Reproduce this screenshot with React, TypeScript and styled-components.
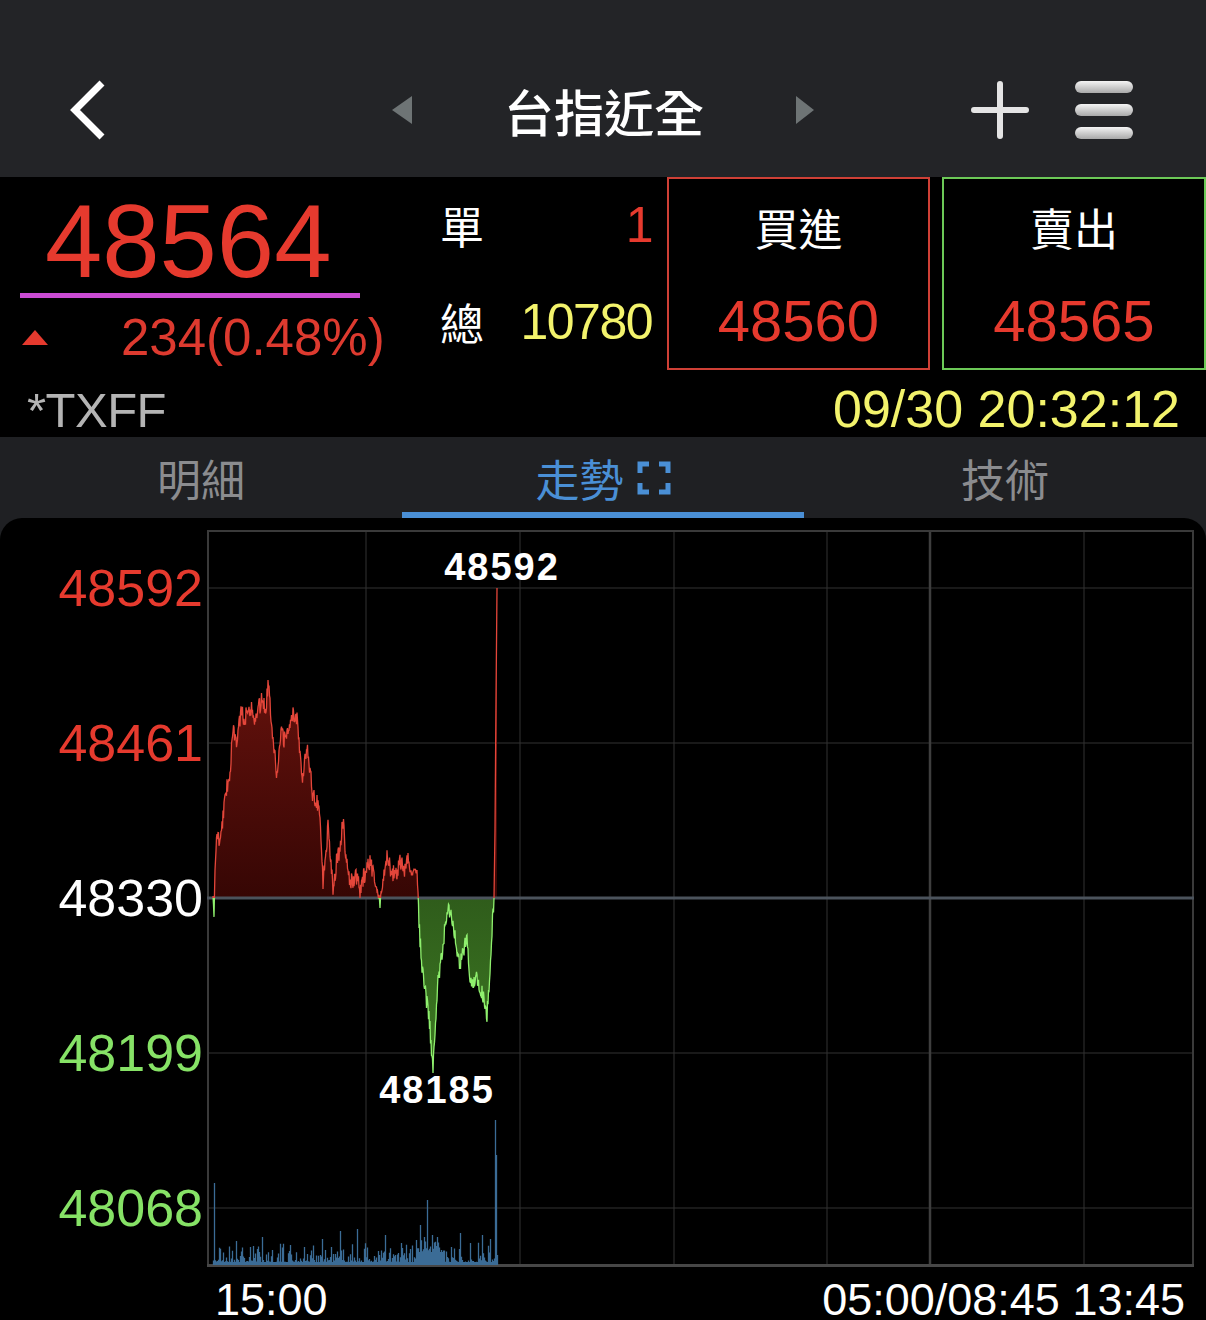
import React from 'react';
import styled, { createGlobalStyle } from 'styled-components';

const RED = '#e63a2e';
const GREEN = '#86e266';
const YELLOW = '#f3f36c';
const BLUE = '#4a8fd5';
const CJK = "'Noto Sans CJK TC', 'Noto Sans CJK SC', sans-serif";
const NUM = "'Liberation Sans', Arial, sans-serif";

// chart box geometry (page coords of the plot frame)
const CX = 207;
const CY = 530;
const CW = 987;
const CH = 737;
const BASE = 368;

const GlobalStyle = createGlobalStyle`
  * { box-sizing: border-box; }
  html, body { margin: 0; padding: 0; background: #000; }
  body {
    width: 1206px;
    height: 1320px;
    overflow: hidden;
    font-family: ${NUM};
  }
`;

// seeded random so the chart is the same on every run
function rng(seed: number) {
  let a = seed;
  return () => {
    a |= 0;
    a = (a + 0x6d2b79f5) | 0;
    let t = Math.imul(a ^ (a >>> 15), 1 | a);
    t = (t + Math.imul(t ^ (t >>> 7), 61 | t)) ^ t;
    return ((t ^ (t >>> 14)) >>> 0) / 4294967296;
  };
}

const KEYS: [number, number][] = [
  [213, 898], [214, 915], [215, 870], [217, 833], [220, 845], [223, 815], [227, 787],
  [230, 770], [233, 733], [237, 740], [241, 712], [245, 720], [248, 703], [252, 712],
  [255, 717], [259, 708], [263, 698], [266, 710], [268, 680], [271, 715], [274, 745],
  [277, 777], [281, 735], [285, 740], [289, 725], [293, 715], [297, 717], [300, 750],
  [302, 780], [305, 755], [307, 747], [310, 770], [313, 797], [317, 800], [320, 813],
  [323, 883], [326, 850], [328, 827], [331, 860], [333, 887], [337, 860], [340, 850],
  [343, 820], [346, 860], [350, 883], [354, 880], [357, 875], [360, 893], [363, 880],
  [366, 870], [370, 863], [374, 875], [377, 885], [380, 905], [383, 880], [387, 857],
  [391, 870], [395, 875], [400, 863], [404, 870], [408, 860], [412, 872], [415, 865],
  [417, 867], [418, 898], [420, 940], [422, 967], [425, 990], [428, 1010], [431, 1040],
  [433, 1068], [435, 1030], [438, 983], [440, 970], [443, 943], [446, 925], [448, 912],
  [451, 918], [453, 920], [456, 940], [460, 967], [463, 950], [467, 943], [470, 977],
  [474, 980], [477, 975], [480, 990], [483, 995], [487, 1013], [489, 990], [490, 973],
  [492, 930], [494, 898], [495, 830], [496, 700], [497, 588],
];

function interp(x: number) {
  for (let i = 1; i < KEYS.length; i++) {
    const [x1, y1] = KEYS[i];
    const [x0, y0] = KEYS[i - 1];
    if (x <= x1) return y0 + ((y1 - y0) * (x - x0)) / (x1 - x0);
  }
  return KEYS[KEYS.length - 1][1];
}

function buildPrice() {
  const r = rng(7);
  const pts: string[] = [];
  for (let x = 213; x < 494; x += 0.5) {
    const amp = x < 216 ? 4 : 18;
    const y = interp(x) + (r() - 0.5) * amp;
    pts.push(`${(x - CX).toFixed(1)},${(y - CY).toFixed(1)}`);
  }
  [494, 495, 496, 497].forEach((x) => pts.push(`${x - CX},${interp(x) - CY}`));
  const line = 'M' + pts.join(' L');
  const area = `M${213 - CX},${BASE} L` + pts.join(' L') + ` L${497 - CX},${BASE} Z`;
  return { line, area };
}

function buildVolume() {
  const r = rng(21);
  const spikes: Record<number, number> = {
    214: 82, 236: 24, 250: 18, 262: 28, 290: 20, 322: 26, 340: 34, 357: 36, 385: 30,
    401: 22, 420: 40, 427: 65, 432: 30, 437: 28, 460: 32, 470: 22, 482: 30, 490: 26,
    495: 145, 496: 110,
  };
  let d = '';
  for (let x = 213; x <= 497; x++) {
    const busy = x > 415 && x < 445 ? 10 : 0;
    const h = spikes[x] ?? 3 + busy + Math.pow(r(), 3) * 20;
    d += `M${x - CX + 0.5},${CH - 2} V${(CH - 2 - h).toFixed(1)} `;
  }
  return d;
}

const price = buildPrice();
const volume = buildVolume();

const H_LINES = [58, 213, 523, 678];
const V_LINES = [159, 313, 467, 620, 877];

const AXIS = [
  { v: '48592', c: RED },
  { v: '48461', c: RED },
  { v: '48330', c: '#ffffff' },
  { v: '48199', c: GREEN },
  { v: '48068', c: GREEN },
];

export default function App() {
  return (
    <>
      <GlobalStyle />
      <Header>
        <NavBar>
          <BackButton aria-label="back">
            <svg width="40" height="62" viewBox="0 0 40 62">
              <path d="M35 4 L8 31 L35 58" fill="none" stroke="#fff" strokeWidth="7" />
            </svg>
          </BackButton>
          <Arrow viewBox="0 0 20 28">
            <polygon points="20,0 0,14 20,28" fill="#6e7475" />
          </Arrow>
          <Title>台指近全</Title>
          <Arrow viewBox="0 0 18 28">
            <polygon points="0,0 18,14 0,28" fill="#6e7475" />
          </Arrow>
          <Actions>
            <svg width="58" height="58" viewBox="0 0 58 58">
              <path d="M29 3 V55 M3 29 H55" stroke="#e4e4e4" strokeWidth="6" strokeLinecap="round" />
            </svg>
            <Menu>
              <MenuBar />
              <MenuBar />
              <MenuBar />
            </Menu>
          </Actions>
        </NavBar>
      </Header>

      <QuoteSection>
        <QuoteTop>
          <PriceCol>
            <LastPrice>48564</LastPrice>
            <Underline />
            <ChangeRow>
              <UpMark />
              <Change>234(0.48%)</Change>
            </ChangeRow>
          </PriceCol>
          <StatCol>
            <StatRow>
              <StatLabel>單</StatLabel>
              <StatValue $color={RED}>1</StatValue>
            </StatRow>
            <StatRow>
              <StatLabel>總</StatLabel>
              <StatValue $color={YELLOW}>10780</StatValue>
            </StatRow>
          </StatCol>
          <OrderBox $tone="buy">
            <OrderLabel>買進</OrderLabel>
            <OrderPrice>48560</OrderPrice>
          </OrderBox>
          <OrderBox $tone="sell">
            <OrderLabel>賣出</OrderLabel>
            <OrderPrice>48565</OrderPrice>
          </OrderBox>
        </QuoteTop>
        <QuoteBottom>
          <Symbol>*TXFF</Symbol>
          <Stamp>09/30 20:32:12</Stamp>
        </QuoteBottom>
      </QuoteSection>

      <Main>
        <TabBar>
          <Tab>明細</Tab>
          <Tab $active>
            走勢
            <svg width="34" height="34" viewBox="0 0 34 34">
              <path
                d="M3 12 V3 H12 M22 3 H31 V12 M31 22 V31 H22 M12 31 H3 V22"
                fill="none"
                stroke={BLUE}
                strokeWidth="5"
              />
            </svg>
          </Tab>
          <Tab>技術</Tab>
        </TabBar>

        <ChartPanel>
          <ChartRow>
            <AxisCol>
              {AXIS.map((a) => (
                <AxisLabel key={a.v} $color={a.c}>
                  {a.v}
                </AxisLabel>
              ))}
            </AxisCol>
            <ChartBox>
              <svg width={CW} height={CH} viewBox={`0 0 ${CW} ${CH}`}>
                <defs>
                  <clipPath id="up">
                    <rect x="0" y="0" width={CW} height={BASE} />
                  </clipPath>
                  <clipPath id="down">
                    <rect x="0" y={BASE} width={CW} height={CH - BASE} />
                  </clipPath>
                  <linearGradient id="redFill" x1="0" y1="140" x2="0" y2={BASE} gradientUnits="userSpaceOnUse">
                    <stop offset="0" stopColor="#66120d" />
                    <stop offset="1" stopColor="#360604" />
                  </linearGradient>
                  <linearGradient id="greenFill" x1="0" y1={BASE} x2="0" y2="540" gradientUnits="userSpaceOnUse">
                    <stop offset="0" stopColor="#2f5c1b" />
                    <stop offset="1" stopColor="#3d7a22" />
                  </linearGradient>
                </defs>

                {H_LINES.map((y) => (
                  <line key={y} x1="0" x2={CW} y1={y} y2={y} stroke="#323232" strokeWidth="1" />
                ))}
                {V_LINES.map((x) => (
                  <line key={x} x1={x} x2={x} y1="0" y2={CH} stroke="#323232" strokeWidth="1" />
                ))}
                <line x1="723" x2="723" y1="0" y2={CH} stroke="#3e3e3e" strokeWidth="2.5" />
                <rect x="1" y="1" width={CW - 2} height={CH - 2} fill="none" stroke="#3a3a3a" strokeWidth="2" />
                <line x1="0" x2={CW} y1={CH - 1.5} y2={CH - 1.5} stroke="#474747" strokeWidth="3" />

                <path d={volume} stroke="#3b6c96" strokeWidth="1.3" />

                <path d={price.area} fill="url(#redFill)" clipPath="url(#up)" />
                <path d={price.area} fill="url(#greenFill)" clipPath="url(#down)" />
                <line x1="0" x2={CW} y1={BASE} y2={BASE} stroke="#4b535c" strokeWidth="3" />
                <path d={price.line} fill="none" stroke="#e4463a" strokeWidth="1.3" clipPath="url(#up)" />
                <path d={price.line} fill="none" stroke="#8ff06e" strokeWidth="1.3" clipPath="url(#down)" />
              </svg>
              <PeakLabel style={{ left: 295, top: 37 }}>48592</PeakLabel>
              <PeakLabel style={{ left: 230, top: 560 }}>48185</PeakLabel>
            </ChartBox>
          </ChartRow>
          <TimeAxis>
            <span>15:00</span>
            <span>05:00/08:45 13:45</span>
          </TimeAxis>
        </ChartPanel>
      </Main>
    </>
  );
}

const Header = styled.header`
  background: #232427;
  height: 177px;
  padding-top: 60px;
`;

const NavBar = styled.nav`
  display: grid;
  grid-template-columns: 392px 20px 384px 18px 1fr;
  align-items: center;
  height: 100px;
`;

const BackButton = styled.button`
  background: none;
  border: 0;
  padding: 0 0 0 67px;
  display: flex;
  align-items: center;
  justify-self: start;
`;

const Arrow = styled.svg`
  width: 100%;
  height: 28px;
`;

const Title = styled.h1`
  margin: 0;
  text-align: center;
  color: #fff;
  font: 500 50px/1 ${CJK};
`;

const Actions = styled.div`
  display: flex;
  align-items: center;
  justify-content: flex-end;
  gap: 46px;
  padding-right: 73px;
`;

const Menu = styled.div`
  display: flex;
  flex-direction: column;
  gap: 11px;
`;

const MenuBar = styled.div`
  width: 58px;
  height: 12px;
  border-radius: 6px;
  background: linear-gradient(#f4f4f4, #a9a9a9);
`;

const QuoteSection = styled.section`
  background: #000;
  height: 260px;
  display: flex;
  flex-direction: column;
`;

const QuoteTop = styled.div`
  display: flex;
  height: 193px;
`;

const PriceCol = styled.div`
  width: 440px;
  padding-top: 13px;
`;

const LastPrice = styled.div`
  color: ${RED};
  font: 103px/1 ${NUM};
  padding-left: 45px;
`;

const Underline = styled.div`
  margin-left: 20px;
  width: 340px;
  height: 5px;
  background: #c94bd2;
`;

const ChangeRow = styled.div`
  display: flex;
  align-items: center;
  margin-top: 14px;
  height: 51px;
`;

const UpMark = styled.span`
  margin-left: 22px;
  width: 0;
  height: 0;
  border-left: 13px solid transparent;
  border-right: 13px solid transparent;
  border-bottom: 15px solid ${RED};
`;

const Change = styled.span`
  margin-left: 73px;
  color: #dd3a2f;
  font: 51px/1 ${NUM};
`;

const StatCol = styled.div`
  width: 215px;
  padding-right: 3px;
  display: flex;
  flex-direction: column;
`;

const StatRow = styled.div`
  height: 97px;
  display: flex;
  align-items: center;
  justify-content: space-between;
`;

const StatLabel = styled.span`
  color: #fff;
  font: 44px/1 ${CJK};
`;

const StatValue = styled.span<{ $color: string }>`
  color: ${(p) => p.$color};
  font: 50px/1 ${NUM};
  letter-spacing: -1.5px;
`;

const OrderBox = styled.div<{ $tone: 'buy' | 'sell' }>`
  width: ${(p) => (p.$tone === 'buy' ? 263 : 264)}px;
  height: 193px;
  margin-left: 12px;
  border: 2px solid ${(p) => (p.$tone === 'buy' ? '#cf4036' : '#6cc957')};
  display: grid;
  grid-template-rows: 1fr 1fr;
  align-items: center;
  justify-items: center;
`;

const OrderLabel = styled.span`
  color: #fff;
  font: 44px/1 ${CJK};
  padding-top: 2px;
`;

const OrderPrice = styled.span`
  color: ${RED};
  font: 58px/1 ${NUM};
`;

const QuoteBottom = styled.div`
  display: flex;
  justify-content: space-between;
  align-items: baseline;
  padding: 13px 26px 0 27px;
  font: 52px/1 ${NUM};
`;

const Symbol = styled.span`
  color: #b4b4b4;
  font-size: 49px;
  letter-spacing: -0.5px;
`;

const Stamp = styled.span`
  color: ${YELLOW};
`;

const Main = styled.main`
  background: #1f2023;
`;

const TabBar = styled.div`
  display: grid;
  grid-template-columns: 402px 402px 402px;
  height: 81px;
`;

const Tab = styled.button<{ $active?: boolean }>`
  background: none;
  border: 0;
  border-bottom: 6px solid ${(p) => (p.$active ? BLUE : 'transparent')};
  padding: 6px 0 0;
  display: flex;
  align-items: center;
  justify-content: center;
  gap: 13px;
  color: ${(p) => (p.$active ? BLUE : '#8b8c8f')};
  font: 44px/1 ${CJK};
`;

const ChartPanel = styled.section`
  background: #000;
  border-radius: 22px 22px 0 0;
  padding-top: 12px;
  height: 802px;
`;

const ChartRow = styled.div`
  display: flex;
`;

const AxisCol = styled.div`
  width: 207px;
  padding: 38px 4px 0 0;
  display: flex;
  flex-direction: column;
  align-items: flex-end;
  gap: 115px;
`;

const AxisLabel = styled.span<{ $color: string }>`
  color: ${(p) => p.$color};
  font: 52px/40px ${NUM};
`;

const ChartBox = styled.div`
  position: relative;
  width: ${CW}px;
  height: ${CH}px;

  & > svg {
    display: block;
  }
`;

const PeakLabel = styled.span`
  position: absolute;
  transform: translate(-50%, -50%);
  color: #fff;
  font: 700 38px/1 ${NUM};
  letter-spacing: 2px;
`;

const TimeAxis = styled.div`
  display: flex;
  justify-content: space-between;
  padding: 10px 21px 0 215px;
  color: #fff;
  font: 45px/1 ${NUM};
`;
